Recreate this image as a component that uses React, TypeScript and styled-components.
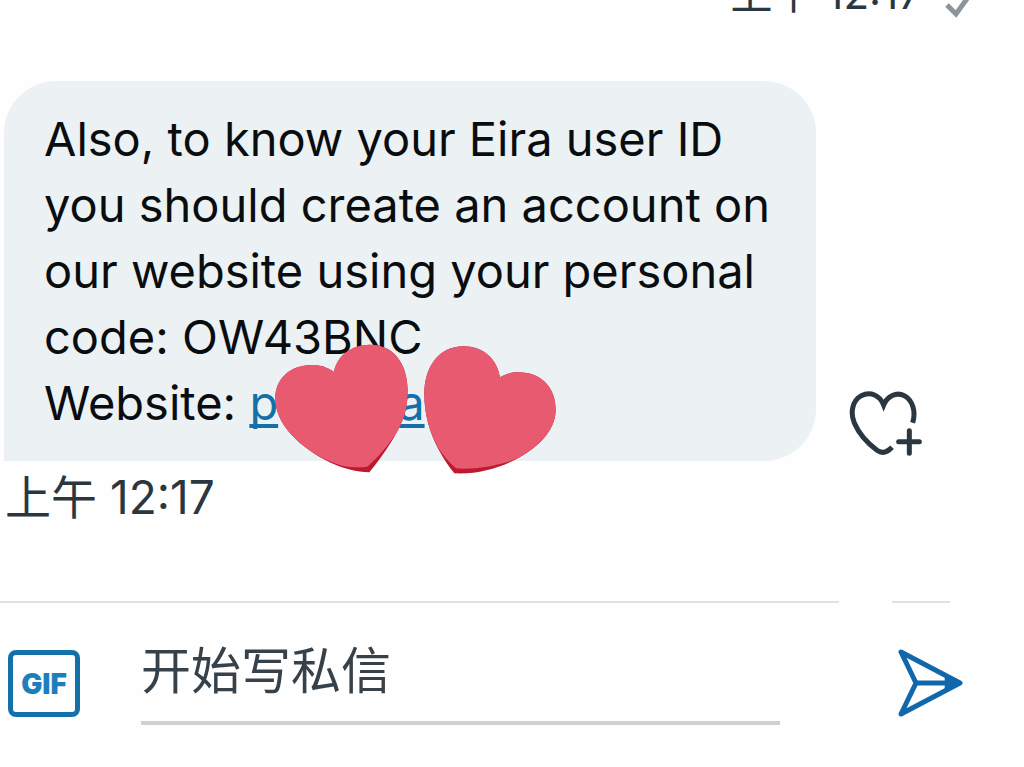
import React from "react";
import styled, { createGlobalStyle } from "styled-components";

const ink = "#2b3740";
const blue = "#1470a8";

const GlobalStyle = createGlobalStyle`
  *, *::before, *::after { box-sizing: border-box; }
  body {
    margin: 0;
    background: #fefefe;
    color: ${ink};
    font-family: Inter, "Noto Sans CJK SC", sans-serif;
  }
`;

const Page = styled.main`
  display: flex;
  flex-direction: column;
  overflow: hidden;
`;

const SentStatus = styled.div`
  display: flex;
  justify-content: flex-end;
  align-items: flex-end;
  gap: 22px;
  height: 24px;
  padding-right: 52px;
  overflow: hidden;
`;

const Time = styled.time<{ $size: number }>`
  display: block;
  font-size: ${(p) => p.$size}px;
  line-height: 60px;
  white-space: nowrap;
`;

const MessageRow = styled.div`
  display: flex;
  align-items: flex-end;
  gap: 32px;
  margin-top: 57px;
  padding: 0 102px 0 4px;
`;

const Bubble = styled.div`
  position: relative;
  flex: 1;
  min-width: 0;
  padding: 25px 40px;
  border-radius: 52px 52px 52px 0;
  background: #ecf1f4;
  color: #0a0d0f;
  font-size: 47px;
  line-height: 66px;
`;

const Text = styled.p`
  margin: 0;
`;

const SiteLink = styled.a`
  color: ${blue};
  text-decoration: underline;
  text-decoration-thickness: 4px;
  text-underline-offset: 4px;
  text-decoration-skip-ink: none;
`;

const Covered = styled.span`
  display: inline-block;
  width: 120px;
`;

const Stickers = styled.svg`
  position: absolute;
  left: 271px;
  top: 263px;
`;

const IconButton = styled.button`
  display: flex;
  flex: none;
  padding: 0;
  border: 0;
  background: none;
`;

const ReactButton = styled(IconButton)`
  margin-bottom: 3px;
`;

const Received = styled.div`
  padding: 6px 5px 0;
`;

const Dividers = styled.div`
  display: flex;
  gap: 53px;
  margin-top: 74px;
  padding-right: 74px;
`;

const Line = styled.hr<{ $short?: boolean }>`
  flex: ${(p) => (p.$short ? "none" : "1")};
  width: ${(p) => (p.$short ? "58px" : "auto")};
  height: 2px;
  margin: 0;
  border: 0;
  background: #dfe1e2;
`;

const Composer = styled.form`
  display: flex;
  align-items: flex-end;
  padding: 36px 61px 40px 8px;
`;

const GifButton = styled(IconButton)`
  align-items: center;
  justify-content: center;
  width: 72px;
  height: 67px;
  margin-bottom: 8px;
  border: 5px solid ${blue};
  border-radius: 8px;
  color: #1c7fbd;
  font: 900 28px/32px Inter, sans-serif;
`;

const Field = styled.input`
  flex: 1;
  min-width: 0;
  height: 86px;
  margin: 0 118px 0 61px;
  padding: 0 0 18px;
  border: 0;
  border-bottom: 4px solid #d0d1d2;
  outline: 0;
  background: none;
  color: ${ink};
  font: 50px/64px Inter, "Noto Sans CJK SC", sans-serif;

  &::placeholder {
    color: #36414a;
    opacity: 1;
  }
`;

const SendButton = styled(IconButton)`
  margin-bottom: 8px;
`;

const Check = () => (
  <svg width="28" height="24" viewBox="0 0 28 24" fill="none" stroke="#8c9499" strokeWidth="5" aria-hidden="true">
    <path d="M3 5 L12 14 L25 -4" />
  </svg>
);

const Hearts = () => (
  <Stickers width="282" height="130" viewBox="105 73 846 390" aria-hidden="true">
    <path
      fill="#be1931"
      d="M282 157C290 112 330 75 390 75C460 75 503 130 503 215C503 275 482 325 450 372C432 400 410 432 388 458C310 455 245 420 195 382C145 342 106 295 106 235C106 178 150 136 215 136C243 136 264 144 282 157Z"
    />
    <path
      fill="#e75a70"
      d="M282 157C290 112 330 75 390 75C460 75 503 130 503 215C503 260 494 297 474 332C446 376 416 412 382 441C358 444 335 443 305 438C260 423 226 406 195 382C145 342 106 295 106 235C106 178 150 136 215 136C243 136 264 144 282 157Z"
    />
    <path
      fill="#be1931"
      d="M780 173C771 118 731 80 670 80C598 80 553 140 553 225C553 285 570 340 595 388C609 414 625 440 643 461C710 464 767 448 818 424C890 388 947 335 947 270C947 205 905 158 835 158C813 158 796 163 780 173Z"
    />
    <path
      fill="#e75a70"
      d="M780 173C771 118 731 80 670 80C598 80 553 140 553 225C553 285 570 340 595 385C610 407 627 428 648 446C705 450 760 440 818 422C890 388 947 335 947 270C947 205 905 158 835 158C813 158 796 163 780 173Z"
    />
  </Stickers>
);

const HeartPlus = () => (
  <svg width="74" height="70" viewBox="0 0 222 210" fill="none" stroke={ink} strokeWidth="15" aria-hidden="true">
    <path d="M194 104C204 72 195 38 169 23C145 11 118 24 107 51C96 22 67 9 40 23C13 38 6 74 19 105C34 140 62 168 87 187C101 197 115 196 132 178" />
    <path strokeWidth="15" strokeLinecap="round" d="M184 128V196M152 161H214" />
  </svg>
);

const SendArrow = () => (
  <svg width="65" height="68" viewBox="0 0 195 204" fill="none" stroke="#1068ab" strokeWidth="15" strokeLinejoin="round" aria-hidden="true">
    <path d="M9 9L186 102L9 195L54 102Z" />
    <path d="M54 102H180" />
    <path fill="#1068ab" stroke="none" d="M140 78L188 102L140 126Z" />
  </svg>
);

export default function App() {
  return (
    <Page>
      <GlobalStyle />
      <SentStatus>
        <Time $size={42}>上午 12:17</Time>
        <Check />
      </SentStatus>

      <MessageRow>
        <Bubble>
          <Text>
            Also, to know your Eira user ID you should create an account on our
            website using your personal code: OW43BNC
          </Text>
          <Text>
            Website:{" "}
            <SiteLink href="#">
              p<Covered />a
            </SiteLink>
          </Text>
          <Hearts />
        </Bubble>
        <ReactButton type="button" aria-label="Add reaction">
          <HeartPlus />
        </ReactButton>
      </MessageRow>

      <Received>
        <Time $size={46}>上午 12:17</Time>
      </Received>

      <Dividers>
        <Line />
        <Line $short />
      </Dividers>

      <Composer onSubmit={(e) => e.preventDefault()}>
        <GifButton type="button">GIF</GifButton>
        <Field type="text" placeholder="开始写私信" aria-label="开始写私信" />
        <SendButton type="submit" aria-label="Send">
          <SendArrow />
        </SendButton>
      </Composer>
    </Page>
  );
}
